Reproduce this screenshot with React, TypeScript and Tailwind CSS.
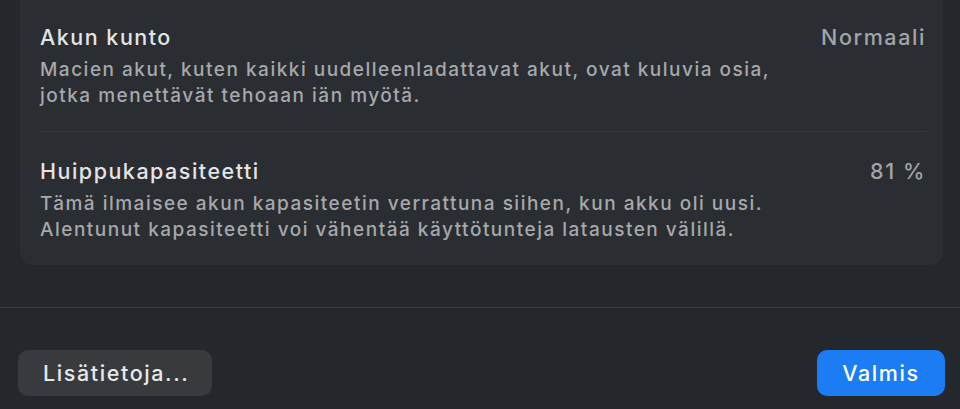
import React from "react";

const rows = [
  {
    title: "Akun kunto",
    value: "Normaali",
    desc: [
      "Macien akut, kuten kaikki uudelleenladattavat akut, ovat kuluvia osia,",
      "jotka menettävät tehoaan iän myötä.",
    ],
  },
  {
    title: "Huippukapasiteetti",
    value: "81 %",
    desc: [
      "Tämä ilmaisee akun kapasiteetin verrattuna siihen, kun akku oli uusi.",
      "Alentunut kapasiteetti voi vähentää käyttötunteja latausten välillä.",
    ],
  },
];

export default function App() {
  return (
    <div
      className="w-[960px] h-[409px] bg-[#24272b] flex flex-col overflow-hidden font-medium"
      style={{ fontFamily: "Inter, 'Noto Sans', sans-serif" }}
    >
      {/* card */}
      <div className="ml-[20px] mr-[17px] rounded-b-[12px] bg-[#2a2d31] pl-[20px] pr-[17px]">
        {rows.map((row, i) => (
          <div
            key={row.title}
            className={
              i === 0
                ? "pt-[23px] pb-[22px] border-b border-[#34373b]"
                : "pt-[25px] pb-[22px]"
            }
          >
            <div className="flex items-center justify-between">
              <span className="text-[21.5px] leading-[28px] tracking-[1.5px] text-[#e4e4e6]">
                {row.title}
              </span>
              <span className="text-[21.5px] leading-[28px] tracking-[1.6px] text-[#a3a4a7]">
                {row.value}
              </span>
            </div>
            <div className="mt-[6px] text-[19px] leading-[26px] tracking-[1.5px] text-[#a7a8ab]">
              {row.desc.map((line) => (
                <div key={line}>{line}</div>
              ))}
            </div>
          </div>
        ))}
      </div>

      <div className="mt-[42px] h-px bg-[#3a3d41]" />

      {/* footer */}
      <div className="flex items-center justify-between pl-[18px] pr-[15px] pt-[42px]">
        <button className="h-[46px] w-[194px] rounded-[10px] bg-[#383a3e] text-left pl-[25px] text-[21.5px] tracking-[1.6px] text-[#e8e8ea]">
          Lisätietoja...
        </button>
        <button className="h-[46px] w-[128px] rounded-[10px] bg-[#1b7cf4] text-[21.5px] tracking-[1.6px] text-white">
          Valmis
        </button>
      </div>
    </div>
  );
}
